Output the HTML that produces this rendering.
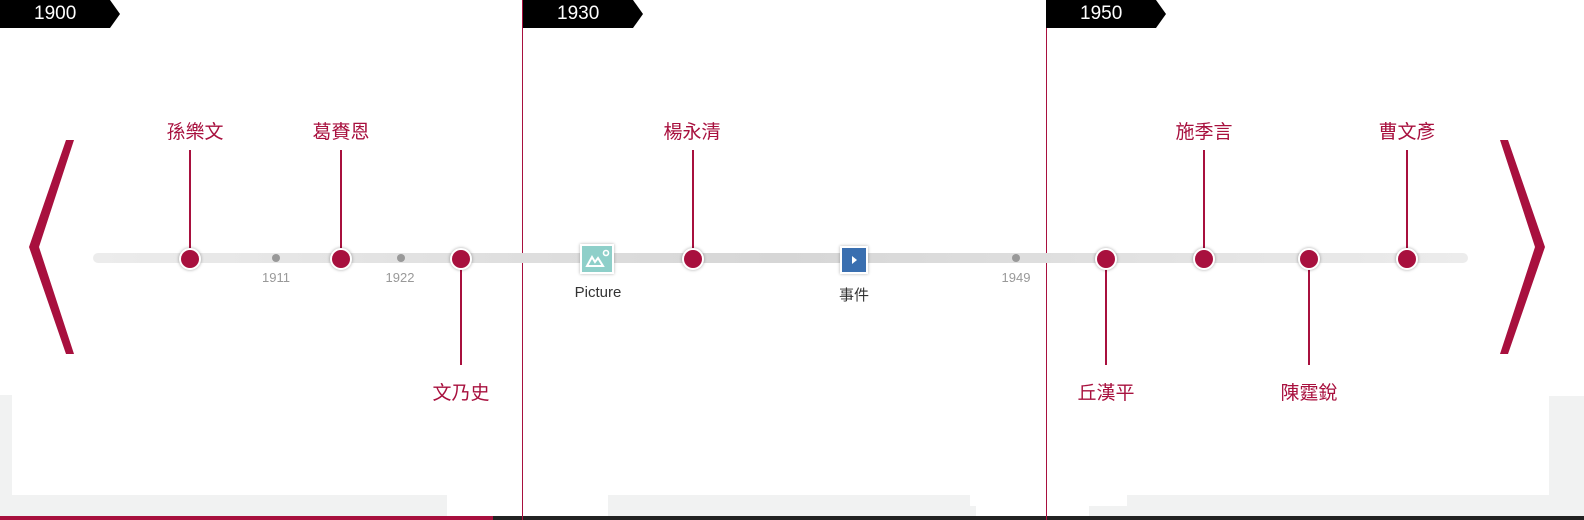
<!DOCTYPE html><html><head><meta charset="utf-8"><style>
body{margin:0;width:1584px;height:520px;position:relative;overflow:hidden;background:#fff;font-family:"Liberation Sans","Noto Sans CJK TC",sans-serif}
.a{position:absolute}
.tag{position:absolute;top:0;height:28px;width:120px;background:#000;color:#fff;font-size:19px;line-height:28px;clip-path:polygon(0 0,110px 0,120px 14px,110px 28px,0 28px)}
.tag span{position:absolute;left:34px}
.vl{position:absolute;top:0;width:1px;height:520px;background:#a8103e}
.dot{position:absolute;width:18px;height:18px;border-radius:50%;background:#a8103e;border:2px solid #fff;box-shadow:0 0 3px rgba(0,0,0,.35);top:248px}
.st{position:absolute;width:2px;background:#a8103e}
.lb{position:absolute;color:#a8103e;font-size:19px;width:100px;text-align:center}
.md{position:absolute;width:8px;height:8px;border-radius:50%;background:#999;top:254px}
.yl{position:absolute;color:#999;font-size:13px;width:60px;text-align:center;top:270px}
.g{position:absolute;background:#f1f2f2}
</style></head><body>
<div class="g" style="left:0;top:395px;width:12px;height:125px"></div>
<div class="g" style="left:0;top:495px;width:447px;height:25px"></div>
<div class="g" style="left:608px;top:495px;width:362px;height:25px"></div>
<div class="g" style="left:608px;top:506px;width:368px;height:14px"></div>
<div class="g" style="left:1127px;top:495px;width:457px;height:25px"></div>
<div class="g" style="left:1089px;top:506px;width:40px;height:14px"></div>
<div class="g" style="left:1549px;top:396px;width:35px;height:124px"></div>
<div class="a" style="left:0;top:516px;width:493px;height:4px;background:#a8103e"></div>
<div class="a" style="left:493px;top:516px;width:1091px;height:4px;background:#222"></div>
<div class="vl" style="left:522px"></div><div class="vl" style="left:1046px"></div>
<div class="tag" style="left:0"><span>1900</span></div>
<div class="tag" style="left:523px"><span>1930</span></div>
<div class="tag" style="left:1046px"><span>1950</span></div>
<div class="a" style="left:93px;top:253px;width:1375px;height:10px;border-radius:5px;background:linear-gradient(90deg,#ececec,#d6d6d6 50%,#ececec)"></div>
<svg class="a" style="left:0;top:0" width="1584" height="520"><polygon points="66,140 74,140 39,247 74,354 66,354 29,247" fill="#a8103e"/><polygon points="1500,140 1508,140 1545,247 1508,354 1500,354 1535,247" fill="#a8103e"/></svg>
<div class="md" style="left:272px"></div><div class="yl" style="left:246px">1911</div>
<div class="md" style="left:397px"></div><div class="yl" style="left:370px">1922</div>
<div class="md" style="left:1012px"></div><div class="yl" style="left:986px">1949</div>
<div class="st" style="left:189px;top:150px;height:100px"></div><div class="dot" style="left:179px"></div><div class="lb" style="left:145px;top:117px">孫樂文</div>
<div class="st" style="left:340px;top:150px;height:100px"></div><div class="dot" style="left:330px"></div><div class="lb" style="left:291px;top:117px">葛賚恩</div>
<div class="st" style="left:460px;top:266px;height:99px"></div><div class="dot" style="left:450px"></div><div class="lb" style="left:411px;top:378px">文乃史</div>
<div class="st" style="left:692px;top:150px;height:100px"></div><div class="dot" style="left:682px"></div><div class="lb" style="left:642px;top:117px">楊永清</div>
<div class="st" style="left:1105px;top:266px;height:99px"></div><div class="dot" style="left:1095px"></div><div class="lb" style="left:1056px;top:378px">丘漢平</div>
<div class="st" style="left:1203px;top:150px;height:100px"></div><div class="dot" style="left:1193px"></div><div class="lb" style="left:1154px;top:117px">施季言</div>
<div class="st" style="left:1308px;top:266px;height:99px"></div><div class="dot" style="left:1298px"></div><div class="lb" style="left:1259px;top:378px">陳霆銳</div>
<div class="st" style="left:1406px;top:150px;height:100px"></div><div class="dot" style="left:1396px"></div><div class="lb" style="left:1357px;top:117px">曹文彥</div>
<div class="a" style="left:580px;top:244px;width:30px;height:26px;background:#8ecfc9;border:2px solid #fff;box-shadow:0 0 3px rgba(0,0,0,.3)"><svg width="30" height="26"><path d="M5 20 L10 11 L13 16 L16 12 L21 20 Z" fill="none" stroke="#fff" stroke-width="2"/><circle cx="24" cy="7" r="2.5" fill="none" stroke="#fff" stroke-width="1.6"/></svg></div>
<div class="a" style="left:548px;top:284px;width:100px;text-align:center;font-size:15px;color:#333">Picture</div>
<div class="a" style="left:840px;top:246px;width:24px;height:24px;background:#3a6fb0;border:2px solid #fff;box-shadow:0 0 3px rgba(0,0,0,.3)"><svg width="24" height="24"><path d="M10 8 L15 12 L10 16Z" fill="#fff"/></svg></div>
<div class="a" style="left:804px;top:284px;width:100px;text-align:center;font-size:15px;color:#333">事件</div>
</body></html>
